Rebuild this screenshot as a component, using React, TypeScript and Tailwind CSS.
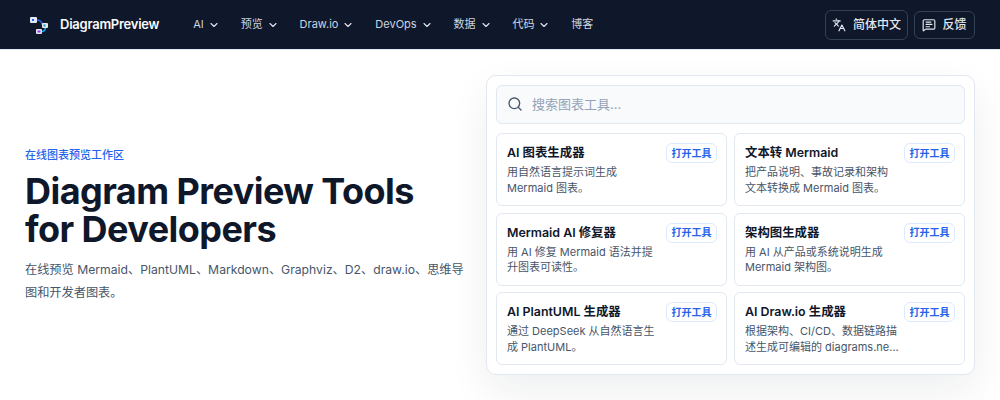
import { ChevronDown, Languages, MessageSquareText, Search } from "lucide-react";

const font = "font-['Inter','Noto_Sans_CJK_SC',sans-serif]";

function Logo() {
  return (
    <svg width="24" height="24" viewBox="0 0 24 24" fill="none">
      <path d="M9 7 C13 7 15 8 15.5 12" stroke="#2563eb" strokeWidth="1.6" fill="none" />
      <path d="M18.5 14 C18.5 17 17.5 18.5 14.5 18.5" stroke="#0ea5e9" strokeWidth="1.6" fill="none" />
      <rect x="3" y="4" width="7" height="6" rx="1" fill="#e2e8f0" />
      <rect x="5" y="6" width="2" height="2" fill="#2563eb" />
      <rect x="15" y="10" width="6" height="5" rx="1" fill="#e2e8f0" />
      <rect x="16.5" y="11.5" width="2" height="2" fill="#0891b2" />
      <rect x="9" y="16" width="6" height="5" rx="1" fill="#e2e8f0" />
      <rect x="10.5" y="17.5" width="3" height="2" fill="#9333ea" />
    </svg>
  );
}

function NavItem({ label, chevron = true }: { label: string; chevron?: boolean }) {
  return (
    <div className="flex items-center gap-[4px] text-[11px] text-[#cbd5e1]">
      <span>{label}</span>
      {chevron && <ChevronDown size={12} strokeWidth={2.2} className="text-[#e2e8f0]" />}
    </div>
  );
}

const tools = [
  { title: "AI 图表生成器", lines: ["用自然语言提示词生成", "Mermaid 图表。"] },
  { title: "文本转 Mermaid", lines: ["把产品说明、事故记录和架构", "文本转换成 Mermaid 图表。"] },
  { title: "Mermaid AI 修复器", lines: ["用 AI 修复 Mermaid 语法并提", "升图表可读性。"] },
  { title: "架构图生成器", lines: ["用 AI 从产品或系统说明生成", "Mermaid 架构图。"] },
  { title: "AI PlantUML 生成器", lines: ["通过 DeepSeek 从自然语言生", "成 PlantUML。"] },
  { title: "AI Draw.io 生成器", lines: ["根据架构、CI/CD、数据链路描", "述生成可编辑的 diagrams.ne..."] },
];

export default function App() {
  return (
    <div className={`${font} h-[400px] w-[1000px] overflow-hidden bg-white`}>
      <header className="flex h-[50px] items-center justify-between border-b border-[#e2e8f0] bg-[#0f172a] pl-[27px] pr-[25px]">
        <div className="flex items-center">
          <div className="flex items-center gap-[9px]">
            <Logo />
            <span className="text-[13px] font-semibold tracking-[-0.25px] text-[#f8fafc]">DiagramPreview</span>
          </div>
          <nav className="ml-[34px] flex items-center gap-[20.9px]">
            <NavItem label="AI" />
            <NavItem label="预览" />
            <NavItem label="Draw.io" />
            <NavItem label="DevOps" />
            <NavItem label="数据" />
            <NavItem label="代码" />
            <NavItem label="博客" chevron={false} />
          </nav>
        </div>
        <div className="flex items-center gap-[6px]">
          <div className="flex h-[30px] w-[83px] items-center justify-center gap-[7px] rounded-md border border-[#334155] text-[12px] font-medium text-[#e2e8f0]">
            <Languages size={14} />
            <span>简体中文</span>
          </div>
          <div className="flex h-[28px] w-[61px] items-center justify-center gap-[6px] rounded-md border border-[#334155] text-[12px] font-medium text-[#e2e8f0]">
            <MessageSquareText size={14} />
            <span>反馈</span>
          </div>
        </div>
      </header>
      <main className="flex h-[350px] items-center px-[25px]">
        <section className="w-[461px] shrink-0">
          <div className="text-[11px] font-medium leading-[16px] text-[#2563eb]">在线图表预览工作区</div>
          <h1 className="mt-[9px] text-[36px] font-bold leading-[38px] tracking-[-0.55px] text-[#0f172a]">
            Diagram Preview Tools
            <br />
            for Developers
          </h1>
          <p className="mt-[10px] w-[440px] text-[12.2px] leading-[23px] text-[#475569]">
            在线预览 Mermaid、PlantUML、Markdown、Graphviz、D2、draw.io、思维导图和开发者图表。
          </p>
        </section>
        <section className="w-[489px] shrink-0 rounded-[10px] border border-[#e2e8f0] bg-white p-[9px] shadow-[0_16px_40px_rgba(15,23,42,0.07)]">
          <div className="flex h-[39px] items-center gap-[9px] rounded-md border border-[#e2e8f0] bg-[#f8fafc] px-[10px]">
            <Search size={16} className="text-[#475569]" />
            <span className="text-[13px] text-[#94a3b8]">搜索图表工具...</span>
          </div>
          <div className="mt-[9.5px] grid grid-cols-2 gap-x-[7px] gap-y-[6.5px]">
            {tools.map((t) => (
              <div key={t.title} className="relative h-[73px] rounded-md border border-[#e2e8f0] bg-white px-[10px] pt-[10px]">
                <div className="text-[12.4px] font-semibold leading-[18px] text-[#0f172a]">{t.title}</div>
                <div className="mt-[3px] text-[11px] leading-[15.5px] text-[#475569]">
                  {t.lines.map((l) => (
                    <div key={l}>{l}</div>
                  ))}
                </div>
                <div className="absolute right-[9px] top-[9px] flex h-[20px] w-[51px] items-center justify-center rounded-md border border-[#dbeafe] text-[10px] font-semibold text-[#2563eb]">
                  打开工具
                </div>
              </div>
            ))}
          </div>
        </section>
      </main>
    </div>
  );
}
